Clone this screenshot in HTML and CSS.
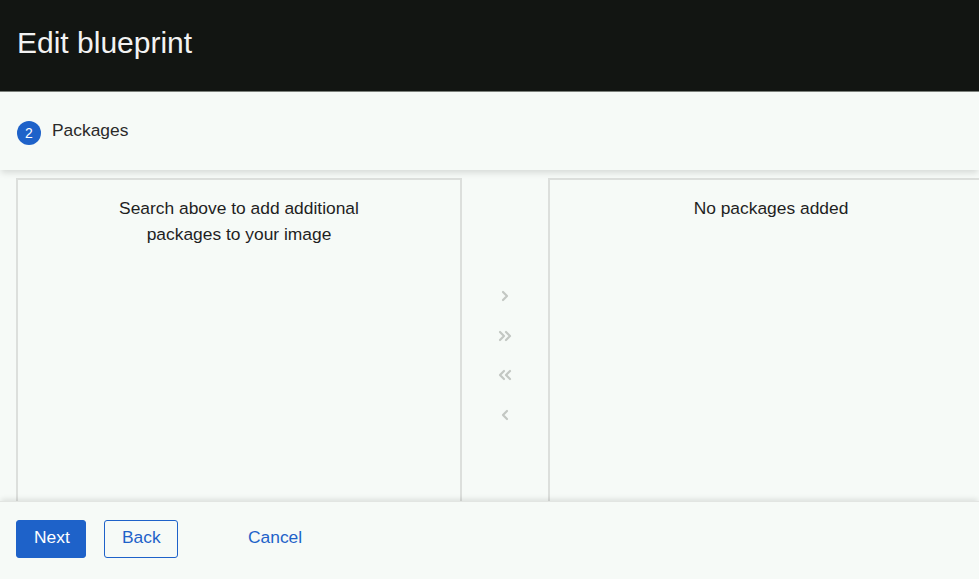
FILE: index.html
```html
<!DOCTYPE html>
<html>
<head>
<meta charset="utf-8">
<link rel="stylesheet" href="styles.css">
</head>
<body>
<div class="page">
  <header class="topbar">
    <h1 class="title">Edit blueprint</h1>
  </header>
  <div class="steps">
    <span class="step-num">2</span>
    <span class="step-label">Packages</span>
  </div>
  <main class="content">
    <div class="panel">
      <p class="empty">Search above to add additional<br>packages to your image</p>
    </div>
    <div class="controls">
      <svg class="ctl" width="14" height="14" viewBox="0 0 14 14"><polyline points="5,3 9,7 5,11" /></svg>
      <svg class="ctl" width="16" height="14" viewBox="0 0 16 14"><polyline points="3,3 7,7 3,11" /><polyline points="9,3 13,7 9,11" /></svg>
      <svg class="ctl" width="16" height="14" viewBox="0 0 16 14"><polyline points="7,3 3,7 7,11" /><polyline points="13,3 9,7 13,11" /></svg>
      <svg class="ctl" width="14" height="14" viewBox="0 0 14 14"><polyline points="9,3 5,7 9,11" /></svg>
    </div>
    <div class="panel">
      <p class="empty">No packages added</p>
    </div>
  </main>
  <footer class="footer">
    <button class="btn btn-primary">Next</button>
    <button class="btn btn-secondary">Back</button>
    <button class="btn btn-link">Cancel</button>
  </footer>
</div>
</body>
</html>
```

FILE: styles.css
```css
html, body {
  margin: 0;
  padding: 0;
  height: 100%;
  overflow: hidden;
}
body {
  font-family: "Liberation Sans", Arial, sans-serif;
  background: #f6faf7;
  color: #222;
}
.page {
  display: flex;
  flex-direction: column;
  height: 579px;
  width: 979px;
  overflow: hidden;
}
.topbar {
  background: #121512;
  height: 91px;
  border-bottom: 1px solid #7b807b;
  display: flex;
  align-items: center;
  padding-left: 17px;
  flex-shrink: 0;
}
.title {
  margin: 0;
  color: #f2f2f2;
  font-weight: 400;
  font-size: 30px;
  position: relative;
  top: -3px;
}
.steps {
  height: 78px;
  display: flex;
  align-items: center;
  padding-left: 17px;
  gap: 11px;
  flex-shrink: 0;
  box-shadow: 0 4px 6px -1px rgba(0,0,0,0.12);
  position: relative;
  z-index: 1;
}
.step-num {
  width: 24px;
  height: 24px;
  border-radius: 50%;
  background: #1e62c9;
  color: #fff;
  font-size: 14px;
  display: flex;
  align-items: center;
  justify-content: center;
  margin-top: 3px;
}
.step-label {
  font-size: 17.4px;
  color: #2a2a2a;
  position: relative;
  top: -1px;
}
.content {
  flex: 1;
  display: flex;
  padding: 8px 0 0 16px;
  min-height: 0;
}
.panel {
  width: 442px;
  flex-shrink: 0;
  border: 2px solid #dcdfdc;
  border-bottom: none;
  text-align: center;
}
.empty {
  margin: 15px 0 0;
  font-size: 17.4px;
  line-height: 26px;
  color: #1f1f1f;
}
.controls {
  width: 86px;
  flex-shrink: 0;
  display: flex;
  flex-direction: column;
  align-items: center;
  padding-top: 111px;
  gap: 25.5px;
}
.ctl {
  fill: none;
  stroke: #c3c7c3;
  stroke-width: 2.2;
  stroke-linecap: round;
  stroke-linejoin: round;
}
.footer {
  height: 78px;
  flex-shrink: 0;
  display: flex;
  align-items: center;
  padding-left: 16px;
  padding-bottom: 4px;
  box-sizing: border-box;
  gap: 18px;
  background: #f6faf7;
  box-shadow: 0 -3px 5px -1px rgba(0,0,0,0.1);
  border-top: 1px solid #e2e5e2;
  position: relative;
  z-index: 1;
}
.btn {
  font-family: "Liberation Sans", Arial, sans-serif;
  font-size: 17.4px;
  height: 38px;
  border-radius: 3px;
  padding: 0 17px 2px;
  cursor: pointer;
}
.btn-primary {
  background: #1e62c9;
  color: #fff;
  border: 1px solid #1e62c9;
  width: 70px;
}
.btn-secondary {
  background: transparent;
  color: #1e62c9;
  border: 1px solid #1e62c9;
  width: 74px;
}
.btn-link {
  background: transparent;
  border: none;
  color: #1e62c9;
  margin-left: 36px;
  padding: 0 16px 2px;
}
```
